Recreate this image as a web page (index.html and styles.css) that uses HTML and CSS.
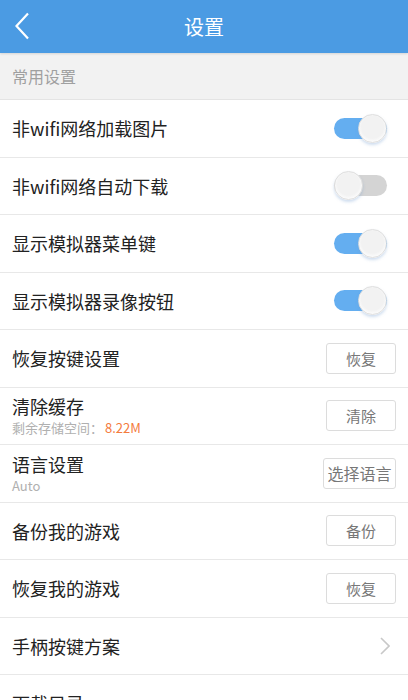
FILE: index.html
```html
<!DOCTYPE html>
<html lang="zh-CN">
<head>
	<meta charset="UTF-8">
	<meta name="viewport" content="width=device-width, initial-scale=1">
	<title>设置</title>
	<link rel="stylesheet" href="styles.css">
</head>
<body>
	<header class="top-bar">
		<a class="back">
			<svg width="16" height="28" viewBox="0 0 16 28"><path d="M14 1.5 L2.5 14 L14 26.5" fill="none" stroke="#fff" stroke-width="2.2"/></svg>
		</a>
		<h1 class="title">设置</h1>
	</header>
	<div class="group-title">常用设置</div>
	<ul class="list">
		<li class="item">
			<div class="label">非wifi网络加载图片</div>
			<span class="switch on"><i></i></span>
		</li>
		<li class="item">
			<div class="label">非wifi网络自动下载</div>
			<span class="switch"><i></i></span>
		</li>
		<li class="item">
			<div class="label">显示模拟器菜单键</div>
			<span class="switch on"><i></i></span>
		</li>
		<li class="item">
			<div class="label">显示模拟器录像按钮</div>
			<span class="switch on"><i></i></span>
		</li>
		<li class="item">
			<div class="label">恢复按键设置</div>
			<span class="btn">恢复</span>
		</li>
		<li class="item">
			<div class="label">清除缓存<p class="sub">剩余存储空间：<em>8.22M</em></p></div>
			<span class="btn">清除</span>
		</li>
		<li class="item">
			<div class="label">语言设置<p class="sub">Auto</p></div>
			<span class="btn wide">选择语言</span>
		</li>
		<li class="item">
			<div class="label">备份我的游戏</div>
			<span class="btn">备份</span>
		</li>
		<li class="item">
			<div class="label">恢复我的游戏</div>
			<span class="btn">恢复</span>
		</li>
		<li class="item">
			<div class="label">手柄按键方案</div>
			<svg class="arrow" width="10" height="18" viewBox="0 0 10 18"><path d="M1 1 L9 9 L1 17" fill="none" stroke="#c8c8c8" stroke-width="1.6"/></svg>
		</li>
		<li class="item">
			<div class="label">下载目录</div>
		</li>
	</ul>
</body>
</html>
```
FILE: styles.css
```css
*{padding: 0;margin: 0;}
*,*:after,*:before{box-sizing:border-box;}
html,body{width: 100%;}
body{
	font-family: "Noto Sans CJK SC", "Noto Sans", sans-serif;
	background: #fff;
	color: #222;
}
ul{list-style: none;}

.top-bar{
	height: 53px;
	background: #4b9be3;
	display: flex;
	align-items: center;
	justify-content: center;
	position: relative;
	box-shadow: 0 1px 2px rgba(0,0,0,.12);
}
.back{
	position: absolute;
	left: 14px;
	top: 12px;
	display: block;
}
.title{
	color: #fff;
	font-size: 20px;
	font-weight: normal;
}

.group-title{
	height: 47px;
	background: #f2f2f2;
	color: #a0a0a0;
	font-size: 16px;
	padding-left: 12px;
	display: flex;
	align-items: center;
	border-bottom: 1px solid #e4e4e4;
}

.item{
	height: 57.5px;
	border-bottom: 1px solid #e8e8e8;
	display: flex;
	align-items: center;
	justify-content: space-between;
	padding: 0 12px;
}
.label{
	font-size: 18px;
	line-height: 22px;
}
.sub{
	font-size: 13px;
	line-height: 17px;
	color: #b0b0b0;
	margin-top: 2px;
}
.sub em{
	font-style: normal;
	color: #f47b3d;
	margin-left: 2px;
}

.btn{
	width: 70px;
	height: 31px;
	border: 1px solid #dcdcdc;
	border-radius: 3px;
	color: #777;
	font-size: 15px;
	display: flex;
	align-items: center;
	justify-content: center;
}
.btn.wide{
	width: 73px;
	font-size: 16px;
}

.switch{
	width: 53px;
	height: 21px;
	border-radius: 11px;
	background: #d4d4d4;
	position: relative;
	margin-right: 9px;
}
.switch.on{background: #64aef0;}
.switch i{
	position: absolute;
	top: -4px;
	left: 0;
	width: 29px;
	height: 29px;
	border-radius: 50%;
	background: radial-gradient(circle at 50% 45%, #f2f2f2 55%, #fafafa 70%, #fff 100%);
	border: 1px solid #dedede;
	box-shadow: 0 2px 3px rgba(120,160,210,.35);
}
.switch.on i{left: 24px;}

.arrow{margin-right: 6px;}
```
